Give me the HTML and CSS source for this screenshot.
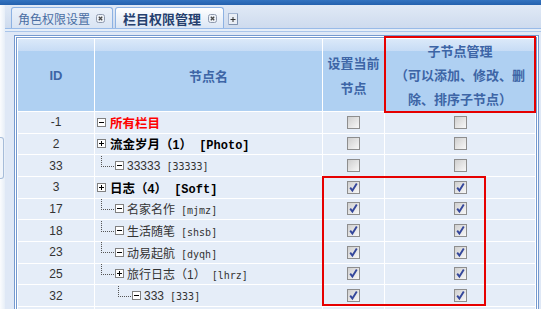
FILE: index.html
```html
<!DOCTYPE html>
<html lang="zh">

<head>
    <meta charset="utf-8" />
    <title>栏目权限管理</title>
    <link rel="stylesheet" href="styles.css">
</head>

<body>
    <div class="topbar"></div>
    <div class="layout">
        <div class="west">
            <div class="handle"></div>
        </div>
        <div class="center">
            <div class="tabstrip">
                <div class="tab">
                    <span>角色权限设置</span>
                    <svg class="close" width="9" height="9" viewBox="0 0 9 9"><rect x="0.5" y="0.5" width="8" height="8" rx="2" fill="#eef2f8" stroke="#8f9aae"/><path d="M2.8 2.8 L6.2 6.2 M6.2 2.8 L2.8 6.2" stroke="#4a4a4a" stroke-width="1.3"/></svg>
                </div>
                <div class="tab active">
                    <span>栏目权限管理</span>
                    <svg class="close" width="9" height="9" viewBox="0 0 9 9"><rect x="0.5" y="0.5" width="8" height="8" rx="2" fill="#eef2f8" stroke="#8f9aae"/><path d="M2.8 2.8 L6.2 6.2 M6.2 2.8 L2.8 6.2" stroke="#4a4a4a" stroke-width="1.3"/></svg>
                </div>
                <svg class="add" width="10" height="12" viewBox="0 0 10 12"><rect x="0.5" y="0.5" width="9" height="11" fill="#e9eef6" stroke="#a3b6d3"/><path d="M9.5 1 V11.5 H1" fill="none" stroke="#7e91ae"/><path d="M2.5 6.5 H7.5 M5 4 V9" stroke="#333" stroke-width="1"/></svg>
            </div>
            <div class="stripgap"></div>
            <div class="body">
                <div class="frame">
                    <div class="frame-in">
                        <table>
                            <colgroup>
                                <col class="w-id">
                                <col class="w-name">
                                <col class="w-cur">
                                <col class="w-sub">
                            </colgroup>
                            <thead>
                                <tr>
                                    <th class="latin">ID</th>
                                    <th>节点名</th>
                                    <th class="h-cur">设置当前节点</th>
                                    <th class="h-sub">子节点管理<br>（可以添加、修改、删除、排序子节点）</th>
                                </tr>
                            </thead>
                            <tbody>
                                <tr>
                                    <td class="id">-1</td>
                                    <td><div class="node">
                                        <svg class="box" width="9" height="9" viewBox="0 0 9 9"><rect x="0.5" y="0.5" width="8" height="8" fill="#fff" stroke="#808080"/><path d="M2 4.5 H7" stroke="#000"/></svg>
                                        <span class="label top red">所有栏目</span>
                                    </div></td>
                                    <td class="c"><span class="cb"></span></td>
                                    <td class="c"><span class="cb"></span></td>
                                </tr>
                                <tr>
                                    <td class="id">2</td>
                                    <td><div class="node">
                                        <svg class="box" width="9" height="9" viewBox="0 0 9 9"><rect x="0.5" y="0.5" width="8" height="8" fill="#fff" stroke="#808080"/><path d="M2 4.5 H7 M4.5 2 V7" stroke="#000"/></svg>
                                        <span class="label top">流金岁月（1）<code> [Photo]</code></span>
                                    </div></td>
                                    <td class="c"><span class="cb"></span></td>
                                    <td class="c"><span class="cb"></span></td>
                                </tr>
                                <tr>
                                    <td class="id">33</td>
                                    <td><div class="node">
                                        <span class="join"></span>
                                        <svg class="box" width="9" height="9" viewBox="0 0 9 9"><rect x="0.5" y="0.5" width="8" height="8" fill="#fff" stroke="#808080"/><path d="M2 4.5 H7" stroke="#000"/></svg>
                                        <span class="label">33333<code> [33333]</code></span>
                                    </div></td>
                                    <td class="c"><span class="cb"></span></td>
                                    <td class="c"><span class="cb"></span></td>
                                </tr>
                                <tr>
                                    <td class="id">3</td>
                                    <td><div class="node">
                                        <svg class="box" width="9" height="9" viewBox="0 0 9 9"><rect x="0.5" y="0.5" width="8" height="8" fill="#fff" stroke="#808080"/><path d="M2 4.5 H7 M4.5 2 V7" stroke="#000"/></svg>
                                        <span class="label top">日志（4）<code> [Soft]</code></span>
                                    </div></td>
                                    <td class="c"><span class="cb on"><svg width="11" height="11" viewBox="0 0 11 11"><path d="M2.2 5.6 L4.4 8.6 L8.8 1.6" fill="none" stroke="#34479b" stroke-width="1.9"/></svg></span></td>
                                    <td class="c"><span class="cb on"><svg width="11" height="11" viewBox="0 0 11 11"><path d="M2.2 5.6 L4.4 8.6 L8.8 1.6" fill="none" stroke="#34479b" stroke-width="1.9"/></svg></span></td>
                                </tr>
                                <tr>
                                    <td class="id">17</td>
                                    <td><div class="node">
                                        <span class="join"></span>
                                        <svg class="box" width="9" height="9" viewBox="0 0 9 9"><rect x="0.5" y="0.5" width="8" height="8" fill="#fff" stroke="#808080"/><path d="M2 4.5 H7" stroke="#000"/></svg>
                                        <span class="label">名家名作<code> [mjmz]</code></span>
                                    </div></td>
                                    <td class="c"><span class="cb on"><svg width="11" height="11" viewBox="0 0 11 11"><path d="M2.2 5.6 L4.4 8.6 L8.8 1.6" fill="none" stroke="#34479b" stroke-width="1.9"/></svg></span></td>
                                    <td class="c"><span class="cb on"><svg width="11" height="11" viewBox="0 0 11 11"><path d="M2.2 5.6 L4.4 8.6 L8.8 1.6" fill="none" stroke="#34479b" stroke-width="1.9"/></svg></span></td>
                                </tr>
                                <tr>
                                    <td class="id">18</td>
                                    <td><div class="node">
                                        <span class="join"></span>
                                        <svg class="box" width="9" height="9" viewBox="0 0 9 9"><rect x="0.5" y="0.5" width="8" height="8" fill="#fff" stroke="#808080"/><path d="M2 4.5 H7" stroke="#000"/></svg>
                                        <span class="label">生活随笔<code> [shsb]</code></span>
                                    </div></td>
                                    <td class="c"><span class="cb on"><svg width="11" height="11" viewBox="0 0 11 11"><path d="M2.2 5.6 L4.4 8.6 L8.8 1.6" fill="none" stroke="#34479b" stroke-width="1.9"/></svg></span></td>
                                    <td class="c"><span class="cb on"><svg width="11" height="11" viewBox="0 0 11 11"><path d="M2.2 5.6 L4.4 8.6 L8.8 1.6" fill="none" stroke="#34479b" stroke-width="1.9"/></svg></span></td>
                                </tr>
                                <tr>
                                    <td class="id">23</td>
                                    <td><div class="node">
                                        <span class="join"></span>
                                        <svg class="box" width="9" height="9" viewBox="0 0 9 9"><rect x="0.5" y="0.5" width="8" height="8" fill="#fff" stroke="#808080"/><path d="M2 4.5 H7" stroke="#000"/></svg>
                                        <span class="label">动易起航<code> [dyqh]</code></span>
                                    </div></td>
                                    <td class="c"><span class="cb on"><svg width="11" height="11" viewBox="0 0 11 11"><path d="M2.2 5.6 L4.4 8.6 L8.8 1.6" fill="none" stroke="#34479b" stroke-width="1.9"/></svg></span></td>
                                    <td class="c"><span class="cb on"><svg width="11" height="11" viewBox="0 0 11 11"><path d="M2.2 5.6 L4.4 8.6 L8.8 1.6" fill="none" stroke="#34479b" stroke-width="1.9"/></svg></span></td>
                                </tr>
                                <tr>
                                    <td class="id">25</td>
                                    <td><div class="node">
                                        <span class="join"></span>
                                        <svg class="box" width="9" height="9" viewBox="0 0 9 9"><rect x="0.5" y="0.5" width="8" height="8" fill="#fff" stroke="#808080"/><path d="M2 4.5 H7 M4.5 2 V7" stroke="#000"/></svg>
                                        <span class="label">旅行日志（1）<code> [lhrz]</code></span>
                                    </div></td>
                                    <td class="c"><span class="cb on"><svg width="11" height="11" viewBox="0 0 11 11"><path d="M2.2 5.6 L4.4 8.6 L8.8 1.6" fill="none" stroke="#34479b" stroke-width="1.9"/></svg></span></td>
                                    <td class="c"><span class="cb on"><svg width="11" height="11" viewBox="0 0 11 11"><path d="M2.2 5.6 L4.4 8.6 L8.8 1.6" fill="none" stroke="#34479b" stroke-width="1.9"/></svg></span></td>
                                </tr>
                                <tr>
                                    <td class="id">32</td>
                                    <td><div class="node">
                                        <span class="join l2"></span>
                                        <svg class="box" width="9" height="9" viewBox="0 0 9 9"><rect x="0.5" y="0.5" width="8" height="8" fill="#fff" stroke="#808080"/><path d="M2 4.5 H7" stroke="#000"/></svg>
                                        <span class="label">333<code> [333]</code></span>
                                    </div></td>
                                    <td class="c"><span class="cb on"><svg width="11" height="11" viewBox="0 0 11 11"><path d="M2.2 5.6 L4.4 8.6 L8.8 1.6" fill="none" stroke="#34479b" stroke-width="1.9"/></svg></span></td>
                                    <td class="c"><span class="cb on"><svg width="11" height="11" viewBox="0 0 11 11"><path d="M2.2 5.6 L4.4 8.6 L8.8 1.6" fill="none" stroke="#34479b" stroke-width="1.9"/></svg></span></td>
                                </tr>
                                <tr>
                                    <td class="id"></td>
                                    <td></td>
                                    <td class="c"></td>
                                    <td class="c"></td>
                                </tr>
                            </tbody>
                        </table>
                    </div>
                    <!-- red annotation boxes drawn over the grid -->
                    <div class="mark mark-head"></div>
                    <div class="mark mark-rows"></div>
                </div>
            </div>
        </div>
    </div>
</body>

</html>
```

FILE: styles.css
```css
body {
    margin: 0;
    font-family: "Liberation Sans", "Noto Sans CJK SC", sans-serif;
    font-size: 12px;
    background-color: #dfe8f6;
    overflow: hidden;
}

.topbar {
    height: 5px;
    background: linear-gradient(#3373c0, #2461ae);
}

.layout {
    display: flex;
    min-height: 304px;
}

.west {
    flex: none;
    width: 5px;
    background: linear-gradient(to right, #fbfcfe, #e7eef7);
}

.handle {
    margin-top: 132px;
    width: 3px;
    height: 40px;
    border: 1px solid #a6bcd9;
    border-left: 0;
    border-radius: 0 3px 3px 0;
    background-color: #f1f5fb;
}

.center {
    flex: 1;
    display: flex;
    flex-direction: column;
    min-width: 0;
}

/* tab strip */
.tabstrip {
    flex: none;
    height: 24px;
    box-sizing: border-box;
    border-bottom: 1px solid #99bbe8;
    background: linear-gradient(#e0e9f6, #cedbee);
    display: flex;
    align-items: flex-end;
    gap: 2px;
    padding-left: 6px;
}

.tab {
    height: 21px;
    box-sizing: border-box;
    border: 1px solid #8db2e3;
    border-bottom: 0;
    border-radius: 3px 3px 0 0;
    display: flex;
    align-items: center;
    gap: 6px;
    padding: 0 7px 0 6px;
    background: linear-gradient(#ebf1fa, #d9e4f3);
    color: #4a6ea3;
    font-family: "Noto Sans CJK SC", sans-serif;
    font-size: 12px;
}

.tab.active {
    padding: 0 6px 0 7px;
    gap: 7px;
    background: linear-gradient(#ffffff, #dbe6f5);
    color: #253f6e;
    font-weight: bold;
    font-size: 13px;
}

.add {
    margin: 0 0 3px 2px;
}

.stripgap {
    flex: none;
    height: 2px;
    background-color: #e6eef8;
    border-bottom: 1px solid #a9c5ea;
}

/* grid */
.body {
    flex: 1;
    padding: 3px 2px 0 9px;
    background-color: #dfe8f6;
}

.frame {
    position: relative;
    border: 1px solid #7499cf;
    padding: 1px;
    background-color: #fff;
}

.frame-in {
    border: 1px solid #7499cf;
    border-bottom: 0;
}

table {
    width: 100%;
    table-layout: fixed;
    border-spacing: 1px;
    background-color: #fff;
}

.w-id { width: 76px; }
.w-name { width: 227px; }
.w-cur { width: 61px; }
.w-sub { width: 150px; }

th {
    height: 72px;
    padding: 0 4px;
    background: linear-gradient(#dbe9f9, #c7dcf5 12px, #afd0f2 12px);
    color: #3d65a6;
    font-family: "Noto Sans CJK SC", sans-serif;
    font-size: 13px;
    font-weight: bold;
    line-height: 25px;
}

th.latin {
    font-family: "Liberation Sans", sans-serif;
}

th.h-sub {
    padding: 0 6px;
    line-height: 24px;
}

td {
    height: 20.67px;
    padding: 0;
    background-color: #e5edf8;
    color: #333;
}

td.id {
    text-align: center;
}

td.c {
    text-align: center;
    line-height: 0;
}

.node {
    display: flex;
    align-items: center;
    height: 20px;
    padding-left: 2px;
    white-space: nowrap;
}

.join {
    align-self: flex-start;
    width: 12px;
    height: 10px;
    margin: 0 1px 0 4px;
    border-left: 1px dotted #555;
    border-bottom: 1px dotted #555;
}

.join.l2 {
    margin-left: 21px;
}

.box {
    flex: none;
}

.label {
    margin-left: 3px;
    font-family: "Liberation Sans", "Noto Sans CJK SC", sans-serif;
}

.label.top {
    margin-left: 4px;
    font-weight: bold;
    font-size: 12.5px;
    color: #000;
}

.label.red {
    color: #f00;
}

code {
    font-family: "DejaVu Sans Mono", monospace;
    font-size: 10px;
}

.label.top code {
    font-family: "Liberation Mono", monospace;
    font-size: 12px;
}

.cb {
    display: inline-block;
    width: 13px;
    height: 13px;
    box-sizing: border-box;
    border: 1px solid #8e8e8e;
    background: linear-gradient(135deg, #cfcfcf, #f8f8f8);
    vertical-align: middle;
}

.mark {
    position: absolute;
    box-sizing: border-box;
    border: 2px solid #e60000;
}

.mark-head {
    left: 369px;
    top: 0;
    width: 152px;
    height: 77px;
}

.mark-rows {
    left: 307px;
    top: 140px;
    width: 164px;
    height: 130px;
}
```
